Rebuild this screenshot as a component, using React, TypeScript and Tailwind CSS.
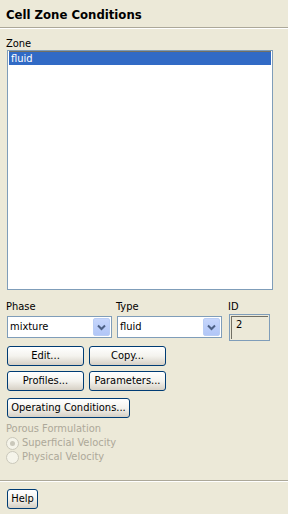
import React from 'react';

const XpButton: React.FC<{ label: string; className?: string }> = ({ label, className = '' }) => (
  <div
    className={`h-[20px] flex items-center justify-center rounded-[3px] border border-[#003c74] bg-gradient-to-b from-[#ffffff] via-[#f4f3ee] to-[#d6d0c5] text-black ${className}`}
  >
    {label}
  </div>
);

const Combo: React.FC<{ value: string }> = ({ value }) => (
  <div className="w-[105px] h-[22px] border border-[#7f9db9] bg-white flex items-stretch">
    <div className="flex-1 flex items-center pl-[2px]">{value}</div>
    <div className="w-[17px] m-[1px] rounded-[2px] bg-gradient-to-b from-[#c6d6fc] to-[#b1c6f7] border border-[#b9cdf5] flex items-center justify-center">
      <svg width="9" height="7" viewBox="0 0 9 7">
        <path d="M1 1.5 L4.5 5 L8 1.5" stroke="#4d6185" strokeWidth="2" fill="none" />
      </svg>
    </div>
  </div>
);

const Radio: React.FC<{ label: string; checked?: boolean }> = ({ label, checked }) => (
  <div className="flex items-center h-[14px] gap-[3px] pl-[6px]">
    <div className="w-[13px] h-[13px] rounded-full border border-[#cac8bb] bg-[#f5f4ea] flex items-center justify-center">
      {checked && <div className="w-[5px] h-[5px] rounded-full bg-[#cac8bb]" />}
    </div>
    <span className="text-[#aca899]">{label}</span>
  </div>
);

export default function App() {
  return (
    <div
      className="w-[288px] h-[514px] bg-[#ece9d8] text-[11px] text-black flex flex-col overflow-hidden"
      style={{ fontFamily: 'Tahoma, "DejaVu Sans Condensed", "Liberation Sans", sans-serif' }}
    >
      <div className="h-[27px] pl-[6px] pt-[7px] font-bold text-[13px] leading-[16px]">Cell Zone Conditions</div>
      <div className="h-[2px] border-t border-[#aca899] border-b border-b-white" />
      <div className="pl-[6px] mt-[8px] h-[13px] leading-[13px]">Zone</div>
      <div className="ml-[7px] w-[266px] h-[240px] border border-[#7f9db9] bg-white p-[1px] pt-0">
        <div className="border-t border-[#716f64] h-[1px]" />
        <div className="bg-[#316ac5] text-white h-[13px] leading-[13px] pl-[2px]">fluid</div>
      </div>

      <div className="flex mt-[10px] ml-[6px]">
        <div className="w-[110px]">
          <div className="h-[13px] leading-[13px]">Phase</div>
          <div className="ml-[1px] mt-[3px]">
            <Combo value="mixture" />
          </div>
        </div>
        <div className="w-[112px]">
          <div className="h-[13px] leading-[13px]">Type</div>
          <div className="ml-[1px] mt-[3px]">
            <Combo value="fluid" />
          </div>
        </div>
        <div>
          <div className="h-[13px] leading-[13px]">ID</div>
          <div className="ml-[1px] mt-[1px] w-[41px] h-[27px] border border-[#7f9db9] p-[1px]">
            <div className="w-full h-full border-t border-l border-[#716f64] pl-[4px] pt-[1px] leading-[13px]">2</div>
          </div>
        </div>
      </div>

      <div className="ml-[7px] mt-[5px] flex flex-col gap-[5px]">
        <div className="flex gap-[5px]">
          <XpButton label="Edit..." className="w-[77px]" />
          <XpButton label="Copy..." className="w-[77px]" />
        </div>
        <div className="flex gap-[5px]">
          <XpButton label="Profiles..." className="w-[77px]" />
          <XpButton label="Parameters..." className="w-[77px]" />
        </div>
        <XpButton label="Operating Conditions..." className="w-[123px] mt-[2px]" />
      </div>

      <div className="pl-[6px] mt-[4px] h-[13px] leading-[13px] text-[#aca899]">Porous Formulation</div>
      <div className="mt-[1px] flex flex-col">
        <Radio label="Superficial Velocity" checked />
        <Radio label="Physical Velocity" />
      </div>

      <div className="mt-[16px] h-[2px] border-t border-[#aca899] border-b border-b-white" />
      <div className="ml-[7px] mt-[7px]">
        <XpButton label="Help" className="w-[31px]" />
      </div>
    </div>
  );
}
